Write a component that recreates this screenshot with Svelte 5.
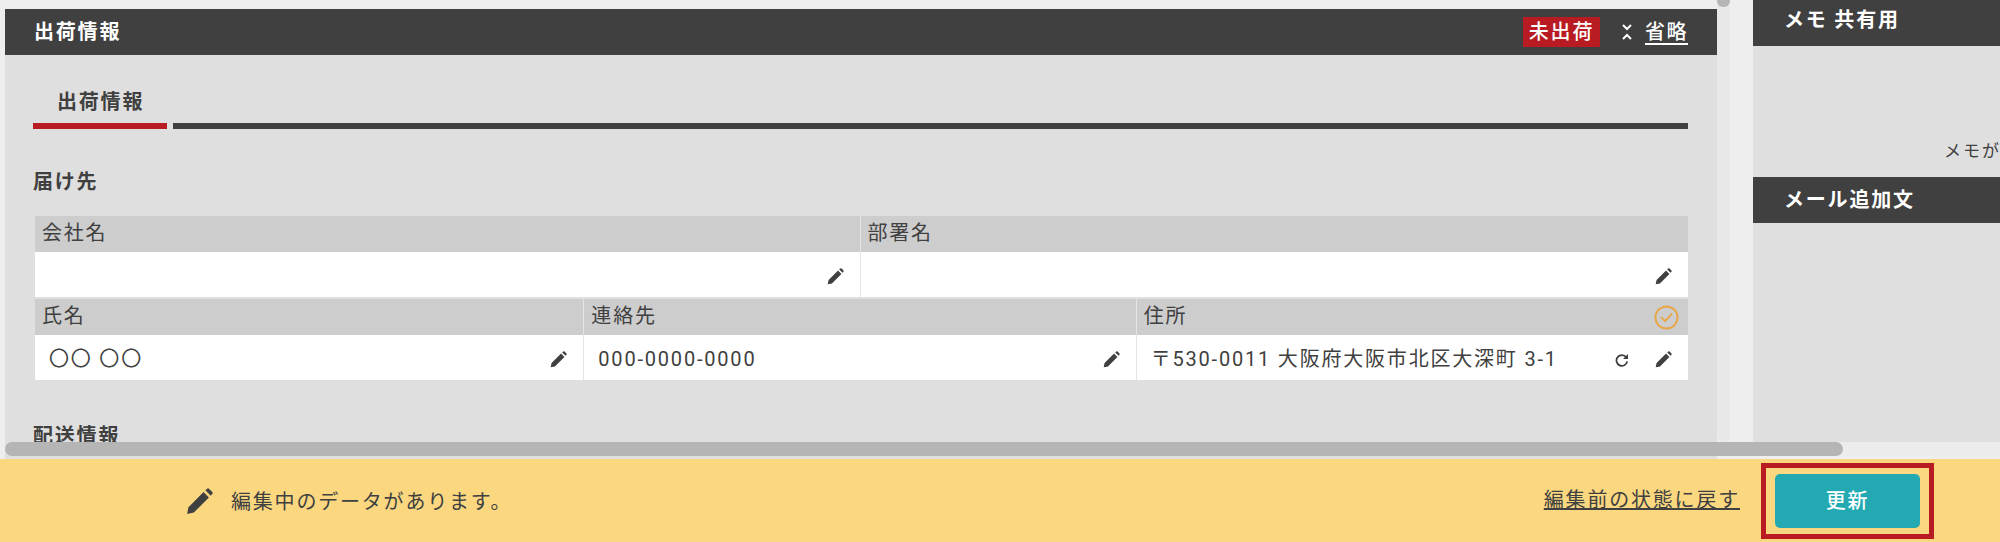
<script>
	const topCols = [
		{ label: '会社名', value: '', flex: 825 },
		{ label: '部署名', value: '', flex: 828 }
	];
	const bottomCols = [
		{ label: '氏名', value: '〇〇 〇〇', flex: 549 },
		{ label: '連絡先', value: '000-0000-0000', flex: 552 },
		{ label: '住所', value: '〒530-0011 大阪府大阪市北区大深町 3-1', flex: 552, address: true }
	];
</script>

{#snippet pencil(size)}
	<svg class="pencil" width={size} height={size} viewBox="0 0 24 24" aria-hidden="true">
		<path d="M1 23l1.2-6L15.6 3.6l4.8 4.8L7 21.8z" />
		<path d="M17.2 2l1.4-1.2a1.4 1.4 0 0 1 2 0l2.6 2.6a1.4 1.4 0 0 1 0 2L22 6.8z" />
	</svg>
{/snippet}

{#snippet row(cols)}
	<div class="row">
		{#each cols as col}
			<div class="cell" style="flex: {col.flex} 0 0">
				<div class="label">
					<span>{col.label}</span>
					{#if col.address}
						<svg class="check" width="25" height="25" viewBox="0 0 24 24" aria-hidden="true">
							<circle cx="12" cy="12" r="10.6" />
							<path d="M6.8 11.6l3.8 4 6.8-7.4" />
						</svg>
					{/if}
				</div>
				<div class="value">
					<span class="text">{col.value}</span>
					{#if col.address}
						<svg class="refresh" width="14" height="14" viewBox="0 0 14 14" aria-hidden="true">
							<path d="M11.2 4.2A5.4 5.4 0 1 0 12.2 8.4" />
							<path class="head" d="M13 1v5H8z" />
						</svg>
					{/if}
					{@render pencil(17)}
				</div>
			</div>
		{/each}
	</div>
{/snippet}

<div class="page">
	<div class="workspace">
		<main class="left">
			<header class="bar main-bar">
				<h2>出荷情報</h2>
				<span class="badge">未出荷</span>
				<svg class="collapse" width="10" height="16" viewBox="0 0 10 16" aria-hidden="true">
					<path d="M1 1l4 4 4-4M1 15l4-4 4 4" />
				</svg>
				<button class="fold">省略</button>
			</header>
			<div class="body">
				<nav class="tabs">
					<div class="tab">出荷情報</div>
					<div class="tab-rest"></div>
				</nav>
				<h3>届け先</h3>
				<div class="table">
					{@render row(topCols)}
					{@render row(bottomCols)}
				</div>
				<h3 class="next">配送情報</h3>
			</div>
		</main>
		<div class="vscroll"><div class="vthumb"></div></div>
		<aside class="right">
			<header class="bar side-bar"><h2 class="first">メモ 共有用</h2></header>
			<div class="memo"><span>メモがありません</span></div>
			<header class="bar side-bar"><h2>メール追加文</h2></header>
			<div class="mail"></div>
		</aside>
		<div class="hscroll"><div class="hthumb"></div></div>
	</div>
	<footer class="notice">
		{@render pencil(27)}
		<span class="message">編集中のデータがあります。</span>
		<button class="revert">編集前の状態に戻す</button>
		<div class="highlight"><button class="update">更新</button></div>
	</footer>
</div>

<style>
	:global(body) {
		margin: 0;
		background: #eee;
		overflow: hidden;
	}

	.page {
		display: flex;
		flex-direction: column;
		height: 542px;
		overflow: hidden;
		color: #404040;
		font-family: Roboto, 'Noto Sans CJK JP', sans-serif;
		font-size: 20px;
		letter-spacing: 1.8px;
		line-height: 26px;
	}

	h2,
	h3 {
		margin: 0;
		font-size: 20px;
		line-height: 26px;
		font-weight: 700;
	}

	button {
		padding: 0;
		border: 0;
		background: none;
		color: inherit;
		font: inherit;
		letter-spacing: inherit;
	}

	.workspace {
		position: relative;
		display: flex;
		height: 459px;
		overflow: hidden;
	}

	.left {
		flex: 0 0 1712px;
		margin: 9px 0 0 5px;
		background: #dfdfdf;
	}

	.bar {
		display: flex;
		align-items: center;
		background: #404040;
		color: #fff;
	}

	.main-bar {
		height: 46px;
		padding: 0 29px 0 29px;
	}

	.main-bar h2 {
		flex: 1;
	}

	.badge {
		width: 77px;
		height: 30px;
		margin-right: 22px;
		background: #b81c22;
		line-height: 30px;
		text-align: center;
		font-weight: 500;
		border-radius: 1px;
	}

	.collapse {
		margin-right: 13px;
		fill: none;
		stroke: #fff;
		stroke-width: 2;
	}

	.fold {
		color: #fff;
		font-weight: 500;
		letter-spacing: 1.5px;
		white-space: nowrap;
		border-bottom: 2px solid #fff;
		line-height: 21px;
		margin-top: 2px;
	}

	.body {
		padding: 0 29px 0 28px;
	}

	.tabs {
		display: flex;
		gap: 6px;
		margin-top: 22px;
	}

	.tab {
		width: 110px;
		padding: 12px 0 8px 24px;
		border-bottom: 6px solid #b81c22;
		font-weight: 700;
	}

	.tab-rest {
		flex: 1;
		border-bottom: 6px solid #404040;
	}

	h3 {
		margin: 40px 0 21px;
	}

	.table {
		display: flex;
		flex-direction: column;
		gap: 2px;
		margin-left: 2px;
		background: #dfdfdf;
	}

	.row {
		display: flex;
	}

	.cell {
		min-width: 0;
		border-left: 1px solid #e4e4e4;
	}

	.cell:first-child {
		border-left: 0;
	}

	.label {
		display: flex;
		align-items: center;
		justify-content: space-between;
		height: 36px;
		padding: 0 8px 0 7px;
		background: #cdcdcd;
	}

	.label span {
		margin-top: -2px;
	}

	.check {
		margin-right: 1px;
		margin-left: auto;
		fill: none;
		stroke: #e9a545;
		stroke-width: 1.8;
	}

	.value {
		display: flex;
		align-items: center;
		height: 45px;
		padding: 0 16px 0 14px;
		background: #fff;
	}

	.text {
		flex: 1;
		margin-top: 2px;
		white-space: nowrap;
	}

	.pencil {
		flex: none;
		fill: #404040;
		margin-top: 4px;
	}

	.refresh {
		flex: none;
		margin: 4px 26px 0 0;
		fill: none;
		stroke: #404040;
		stroke-width: 1.8;
	}

	.refresh .head {
		fill: #404040;
		stroke: none;
	}

	.next {
		margin-top: 43px;
	}

	.vscroll {
		flex: 0 0 13px;
		background: #e8e8e8;
		border-radius: 0 0 6px 6px;
		height: 442px;
	}

	.vthumb {
		height: 7px;
		background: #b5b5b5;
		border-radius: 0 0 6px 6px;
	}

	.right {
		flex: 0 0 247px;
		margin-left: 23px;
		display: flex;
		flex-direction: column;
		height: 442px;
		background: #dfdfdf;
	}

	.side-bar {
		flex: none;
		height: 46px;
		padding: 0 31px;
	}

	.side-bar h2 {
		white-space: nowrap;
	}

	.side-bar h2.first {
		margin-top: -6px;
	}

	.memo {
		flex: 0 0 131px;
		box-sizing: border-box;
		padding: 92px 0 0 191px;
		overflow: hidden;
		font-size: 17px;
		white-space: nowrap;
		letter-spacing: 2px;
	}

	.mail {
		flex: 1;
	}

	/* overlay scrollbar along the bottom of the scroll area */
	.hscroll {
		position: absolute;
		left: 0;
		right: 0;
		top: 442px;
		height: 14px;
		background: linear-gradient(to right, transparent 1843px, #ececec 1843px);
	}

	.hthumb {
		width: 1838px;
		height: 14px;
		margin-left: 5px;
		background: #b5b5b5;
		border-radius: 7px;
	}

	.notice {
		flex: 1;
		display: flex;
		align-items: center;
		padding-left: 186px;
		background: #fbd880;
	}

	.notice .pencil {
		margin: 2px 18px 0 0;
	}

	.message {
		flex: 1;
		margin-top: 2px;
		white-space: nowrap;
	}

	.revert {
		margin: -1px 21px 0 0;
		text-decoration: underline;
		white-space: nowrap;
		letter-spacing: 1.8px;
	}

	.highlight {
		box-sizing: border-box;
		width: 173px;
		height: 76px;
		margin-right: 66px;
		padding: 6px 9px;
		border: 5px solid #b81c22;
	}

	.update {
		display: block;
		width: 145px;
		height: 54px;
		background: #22a9b1;
		border-radius: 5px;
		color: #fff;
		font-weight: 500;
	}
</style>
